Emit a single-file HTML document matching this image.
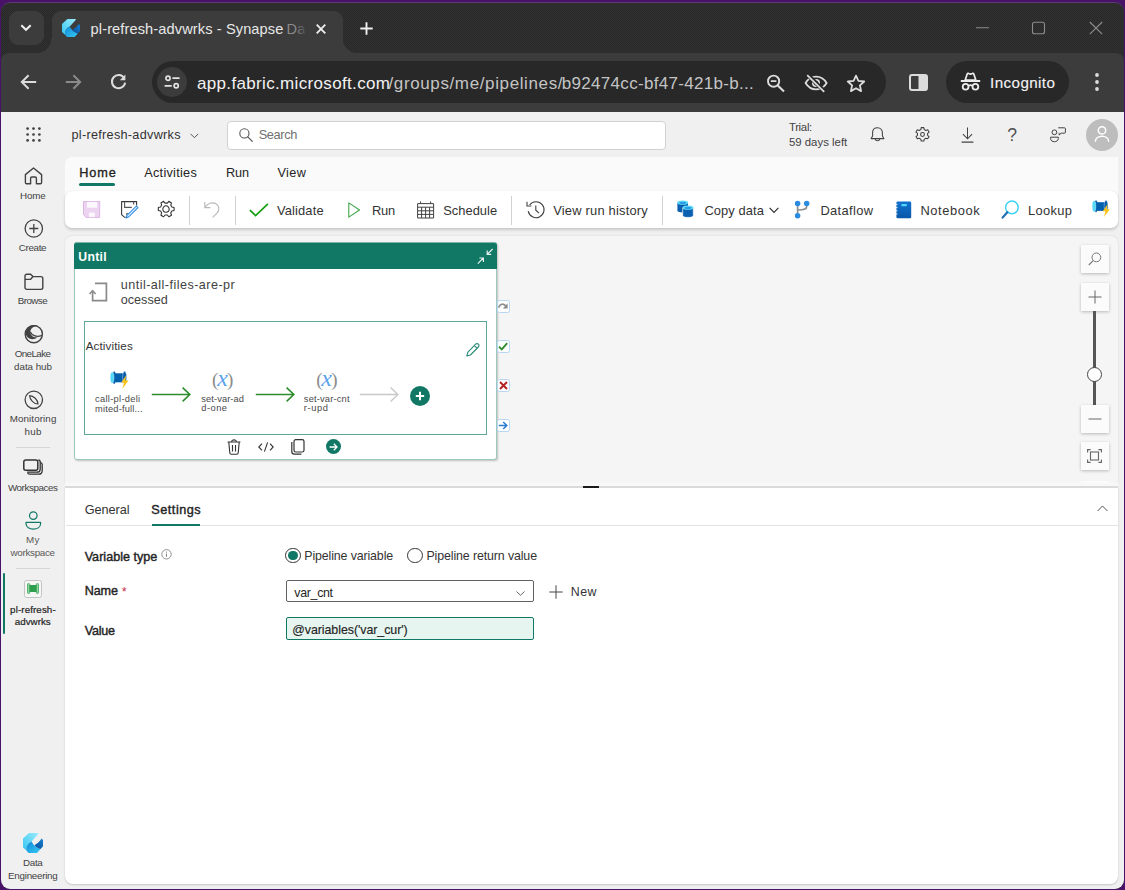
<!DOCTYPE html>
<html lang="en">
<head>
<meta charset="utf-8">
<title>pl-refresh-advwrks - Synapse Data Engineering</title>
<style>
*{box-sizing:border-box;margin:0;padding:0}
html,body{width:1125px;height:890px;overflow:hidden}
body{background:#471267;font-family:"Liberation Sans",sans-serif;position:relative;color:#242424}
.abs,.t{position:absolute}
.t{white-space:nowrap;line-height:1;transform-origin:0 0}
svg{position:absolute;overflow:visible}
#win{position:absolute;left:1px;top:2px;width:1123px;height:886.500px;border-radius:9px;background-color:#292929;background-image:conic-gradient(#313131 25%,transparent 0 50%,#313131 0 75%,transparent 0);background-size:2px 2px;overflow:hidden;border-top:1px solid #5e3b72}
/* everything inside #win uses page coords via offset wrapper */
#pg{position:absolute;left:-1px;top:-3px;width:1125px;height:890px}
#tab{left:51.500px;top:11px;width:291px;height:45px;background:#3c3c3c;border-radius:9px 9px 0 0}
#tbar{left:1px;top:53px;width:1123px;height:60px;background:#3c3c3c;border-radius:8px 8px 0 0}
#url{left:152px;top:61px;width:734px;height:42px;border-radius:21px;background:#282828}
#incog{left:946px;top:61px;width:123px;height:42px;border-radius:21px;background:#282828}
#page{left:1px;top:112px;width:1123px;height:778px;background:#f0f0f0}
#content{left:65px;top:157px;width:1053px;height:40px;background:#fafafa;border-radius:7px 0 0 0}
#ribbon{left:65px;top:191px;width:1053px;height:37px;background:#fff;border-radius:7px;box-shadow:0 2px 3px rgba(0,0,0,.16),0 0 1px rgba(0,0,0,.14)}
#canvas{left:65px;top:236px;width:1053px;height:247px;background:#f5f5f5;border-radius:7px 7px 0 0;box-shadow:0 0 2px rgba(0,0,0,.12)}
#bottom{left:65px;top:487px;width:1053px;height:397px;background:#fff;border-radius:0 0 8px 8px;box-shadow:0 1px 2px rgba(0,0,0,.18)}
.zb{left:1081px;width:28px;height:28px;background:#fbfbfb;box-shadow:0 1px 3px rgba(0,0,0,.25)}
.sep{position:absolute;width:1px;background:#d1d1d1}
</style>
</head>
<body>
<div id="win"><div id="pg">

<!-- ===== browser chrome ===== -->
<div class="abs" id="tab"></div>
<div class="abs" id="tbar"></div>
<div class="abs" style="left:36px;top:37.500px;width:15.500px;height:15.500px;background:radial-gradient(circle at 0 0,rgba(60,60,60,0) 15px,#3c3c3c 15.800px)"></div>
<div class="abs" style="left:342.500px;top:37.500px;width:15.500px;height:15.500px;background:radial-gradient(circle at 100% 0,rgba(60,60,60,0) 15px,#3c3c3c 15.800px)"></div>
<div class="abs" style="left:9px;top:11px;width:35px;height:34px;border-radius:9px;background:#3c3c3c"></div>
<div class="abs" id="url"></div>
<div class="abs" id="incog"></div>


<!-- tab search button chevron -->
<svg style="left:9.400px;top:11px" width="34" height="33" viewBox="0 0 34 33"><path d="M12.3 14.2 L17 18.8 L21.7 14.2" fill="none" stroke="#f0f0f0" stroke-width="2"/></svg>
<!-- favicon -->
<svg style="left:62px;top:19px" width="18" height="18" viewBox="0 0 20 20">
<linearGradient id="fa1" x1="0" y1="1" x2="1" y2="0"><stop offset="0" stop-color="#35c6f2"/><stop offset="1" stop-color="#9aebfc"/></linearGradient>
<linearGradient id="fa2" x1="0" y1="0" x2="1" y2="1"><stop offset="0" stop-color="#138ad8"/><stop offset="1" stop-color="#33c9f5"/></linearGradient>
<linearGradient id="fa3" x1="1" y1="0" x2="0" y2="1"><stop offset="0" stop-color="#1583d3"/><stop offset="1" stop-color="#084c9a"/></linearGradient>
<path d="M6 0 L15.2 0 L15.2 1 L8.6 8.4 C5 10 3.2 13 3.4 17.4 L0 14.4 L0 5.6 Z" fill="url(#fa1)"/>
<path d="M8.6 8.4 C5 10 3 13 3.4 17.4 L5.6 20 L14 20 L17.6 16 C14 15 10.5 12.5 8.6 8.4 Z" fill="url(#fa2)"/>
<path d="M18.5 5.6 L20 7 L20 13.2 L17.6 16 C15 15.3 13 14 11.5 12.2 C14.5 10.5 17 8.5 18.5 5.6 Z" fill="url(#fa3)"/>
</svg>
<span class="t" style="left:90.624px;top:22.44px;font-size:14.6px;letter-spacing:0.109px;color:#e8e8e8">pl-refresh-advwrks - Synapse</span>
<span class="t" style="left:286.624px;top:22.44px;font-size:14.6px;color:#8a8a8a">Da</span>
<div class="abs" style="left:296px;top:18px;width:14px;height:22px;background:linear-gradient(90deg,rgba(60,60,60,0),#3c3c3c 80%)"></div>
<svg style="left:316px;top:24px" width="10" height="10" viewBox="0 0 10 10"><path d="M0.7 0.7 L9.3 9.3 M9.3 0.7 L0.7 9.3" stroke="#f0f0f0" stroke-width="1.8" fill="none"/></svg>
<svg style="left:360px;top:22px" width="13" height="13" viewBox="0 0 13 13"><path d="M6.5 0.3 V12.7 M0.3 6.5 H12.7" stroke="#f0f0f0" stroke-width="1.9" fill="none"/></svg>
<!-- window controls -->
<svg style="left:975px;top:20px" width="130" height="16" viewBox="0 0 130 16">
<path d="M1 7.8 H14" stroke="#8d8d8d" stroke-width="1.1" fill="none"/>
<rect x="57.5" y="2.3" width="12" height="11.5" rx="2" fill="none" stroke="#8d8d8d" stroke-width="1.1"/>
<path d="M114.8 2 L127.2 14.2 M127.2 2 L114.8 14.2" stroke="#8d8d8d" stroke-width="1.1" fill="none"/>
</svg>
<!-- nav buttons -->
<svg style="left:20px;top:73px" width="110" height="18" viewBox="0 0 110 18">
<path d="M16.2 9 H2.5 M8.6 2.2 L1.8 9 L8.6 15.8" stroke="#dcdcdc" stroke-width="2" fill="none"/>
<path d="M45.8 9 H59.5 M53.4 2.2 L60.2 9 L53.4 15.8" stroke="#8a8a8a" stroke-width="2" fill="none"/>
<path d="M104.2 5.2 A6.6 6.6 0 1 0 105.1 9.6" stroke="#dcdcdc" stroke-width="2" fill="none"/>
<path d="M105.4 1.6 V7.2 H99.8 Z" fill="#dcdcdc"/>
</svg>
<!-- site info -->
<div class="abs" style="left:157px;top:67px;width:30px;height:30px;border-radius:15px;background:#3c3c3c"></div>
<svg style="left:164px;top:74px" width="16" height="16" viewBox="0 0 16 16">
<circle cx="4" cy="4.2" r="2.1" fill="none" stroke="#e3e3e3" stroke-width="1.7"/><path d="M8.4 4.2 H15.6" stroke="#e3e3e3" stroke-width="1.8"/>
<circle cx="12.2" cy="11.8" r="2.1" fill="none" stroke="#e3e3e3" stroke-width="1.7"/><path d="M0.6 11.8 H7.8" stroke="#e3e3e3" stroke-width="1.8"/>
</svg>
<span class="t" style="left:196.98px;top:75.21px;font-size:17px;letter-spacing:0.341px;color:#f2f2f2">app.fabric.microsoft.com</span>
<span class="t" style="left:388.48px;top:75.21px;font-size:17px;letter-spacing:0.622px;color:#c4c4c4">/groups/me/pipelines/</span>
<span class="t" style="left:561.78px;top:75.21px;font-size:17px;letter-spacing:0.309px;color:#c4c4c4">b92474cc-bf47-421b-b...</span>
<!-- zoom / eye / star -->
<svg style="left:766px;top:73px" width="102" height="20" viewBox="0 0 102 20">
<circle cx="7.6" cy="8.2" r="5.6" fill="none" stroke="#dcdcdc" stroke-width="1.9"/><path d="M11.8 12.4 L18 18.6" stroke="#dcdcdc" stroke-width="2.1"/><path d="M4.8 8.2 H10.4" stroke="#dcdcdc" stroke-width="1.7"/>
<path d="M39.6 10 C43 4.2 47 3.6 50 3.6 C54 3.6 58 5.6 60.6 10 C58 14.6 54 16.4 50 16.4 C47 16.4 43 15.6 39.6 10 Z" fill="none" stroke="#dcdcdc" stroke-width="1.8"/>
<circle cx="50" cy="10" r="3.2" fill="none" stroke="#dcdcdc" stroke-width="1.7"/><path d="M41.6 1.8 L58.6 18.4" stroke="#282828" stroke-width="4.2"/><path d="M41.2 2.2 L58.2 18.8" stroke="#dcdcdc" stroke-width="1.8"/>
<path d="M90 2.6 L92.4 7.9 L98.2 8.5 L93.9 12.4 L95.1 18.1 L90 15.2 L84.9 18.1 L86.1 12.4 L81.8 8.5 L87.6 7.9 Z" fill="none" stroke="#dcdcdc" stroke-width="1.8" stroke-linejoin="round"/>
</svg>
<!-- side panel -->
<svg style="left:909px;top:74px" width="19" height="17" viewBox="0 0 19 17"><rect x="1" y="1" width="17" height="15" rx="2" fill="none" stroke="#dcdcdc" stroke-width="2"/><rect x="9.5" y="1" width="8.5" height="15" fill="#dcdcdc"/></svg>
<!-- incognito -->
<svg style="left:960px;top:72px" width="21" height="20" viewBox="0 0 21 20">
<path d="M5.2 8 L7.2 2 C7.5 1.3 8.2 1.1 8.8 1.4 L10.5 2.2 L12.2 1.4 C12.8 1.1 13.5 1.3 13.8 2 L15.8 8 Z" fill="none" stroke="#ececec" stroke-width="1.7" stroke-linejoin="round"/>
<path d="M0.8 9 H20.2" stroke="#ececec" stroke-width="1.9"/>
<circle cx="5.6" cy="14.8" r="2.9" fill="none" stroke="#ececec" stroke-width="1.8"/><circle cx="15.4" cy="14.8" r="2.9" fill="none" stroke="#ececec" stroke-width="1.8"/><path d="M8.4 14 C9.6 13 11.4 13 12.6 14" fill="none" stroke="#ececec" stroke-width="1.6"/>
</svg>
<span class="t" style="left:990.088px;top:75.13px;font-size:15.2px;letter-spacing:0.398px;color:#f2f2f2;font-weight:normal;-webkit-text-stroke:0.15px #f2f2f2">Incognito</span>
<svg style="left:1094px;top:72px" width="6" height="20" viewBox="0 0 6 20"><circle cx="3" cy="3" r="1.9" fill="#dcdcdc"/><circle cx="3" cy="10" r="1.9" fill="#dcdcdc"/><circle cx="3" cy="17" r="1.9" fill="#dcdcdc"/></svg>

<!-- ===== page ===== -->
<div class="abs" id="page"></div>

<!-- ===== app header ===== -->
<svg style="left:26px;top:127px" width="15" height="15" viewBox="0 0 15 15" fill="#424242">
<circle cx="1.6" cy="1.6" r="1.350"/><circle cx="7.5" cy="1.6" r="1.350"/><circle cx="13.4" cy="1.6" r="1.350"/>
<circle cx="1.6" cy="7.5" r="1.350"/><circle cx="7.5" cy="7.5" r="1.350"/><circle cx="13.4" cy="7.5" r="1.350"/>
<circle cx="1.6" cy="13.4" r="1.350"/><circle cx="7.5" cy="13.4" r="1.350"/><circle cx="13.4" cy="13.4" r="1.350"/></svg>
<span class="t" style="left:71.538px;top:129.45px;font-size:12.7px;letter-spacing:0.275px;color:#333">pl-refresh-advwrks</span>
<svg style="left:190px;top:133px" width="9" height="6" viewBox="0 0 9 6"><path d="M0.6 0.9 L4.4 4.7 L8.2 0.9" fill="none" stroke="#555" stroke-width="1"/></svg>
<div class="abs" style="left:227px;top:120.5px;width:439px;height:29px;background:#fff;border:1px solid #d1d1d1;border-radius:4px"></div>
<svg style="left:238.5px;top:128px" width="14" height="14" viewBox="0 0 14 14"><circle cx="5.4" cy="5.4" r="4.6" fill="none" stroke="#555" stroke-width="1.1"/><path d="M8.8 8.8 L13.3 13.3" stroke="#555" stroke-width="1.2" stroke-linecap="round"/></svg>
<span class="t" style="left:258.632px;top:128.96px;font-size:12.8px;letter-spacing:-0.362px;color:#707070">Search</span>
<span class="t" style="left:788.916px;top:122.05px;font-size:11.4px;letter-spacing:-0.305px;color:#424242">Trial:</span>
<span class="t" style="left:788.916px;top:137.15px;font-size:11.4px;letter-spacing:0.009px;color:#424242">59 days left</span>
<!-- bell -->
<svg style="left:870px;top:126.5px" width="15" height="16" viewBox="0 0 15 16"><path d="M7.5 0.8 C4.4 0.8 2.6 3 2.6 5.8 V9 L1.1 11.6 H13.9 L12.4 9 V5.8 C12.4 3 10.6 0.8 7.5 0.8 Z" fill="none" stroke="#424242" stroke-width="1.05" stroke-linejoin="round"/><path d="M5.3 12 C5.6 14.4 9.4 14.4 9.7 12" fill="none" stroke="#424242" stroke-width="1.05"/></svg>
<!-- gear -->
<svg style="left:914px;top:125.800px" width="17" height="17" viewBox="0 0 24 24"><path d="M12 9.300a2.700 2.700 0 1 0 0 5.400a2.700 2.700 0 1 0 0-5.400z M10.200 2.300l-.6 2.700-2.300 1.300-2.600-.9-1.900 3.200 2.100 1.800v2.700l-2.100 1.800 1.900 3.200 2.600-.9 2.300 1.300.6 2.700h3.700l.6-2.700 2.300-1.300 2.600.9 1.900-3.200-2.100-1.800v-2.700l2.100-1.800-1.900-3.200-2.600.9-2.300-1.300-.6-2.700z" fill="none" stroke="#424242" stroke-width="1.5" stroke-linejoin="round"/></svg>
<!-- download -->
<svg style="left:961px;top:127px" width="13" height="16" viewBox="0 0 13 16"><path d="M6.500 0.500 V11.600 M1.900 7.200 L6.500 11.800 L11.100 7.200 M0.600 15.100 H12.400" fill="none" stroke="#424242" stroke-width="1.05"/></svg>
<span class="t" style="left:1007.14px;top:127.20px;font-size:17.6px;color:#505050">?</span>
<!-- feedback -->
<svg style="left:1050px;top:126.5px" width="16" height="16" viewBox="0 0 16 16"><circle cx="4.4" cy="5.300" r="2.400" fill="none" stroke="#424242" stroke-width="1"/><path d="M0.600 10.200 H8.300 V11.500 C8.300 15.800 0.600 15.800 0.600 11.500 Z" fill="none" stroke="#424242" stroke-width="1" stroke-linejoin="round"/><path d="M8.200 0.800 H14.600 C15.100 0.800 15.400 1.100 15.400 1.600 V5.400 C15.400 5.900 15.100 6.200 14.600 6.200 H11.200 L9.200 8 V6.200 H8.800" fill="none" stroke="#424242" stroke-width="1" stroke-linejoin="round"/></svg>
<!-- avatar -->
<div class="abs" style="left:1086px;top:118.500px;width:32px;height:32px;border-radius:16px;background:#bdbdbd"></div>
<svg style="left:1093px;top:125px" width="18" height="18" viewBox="0 0 18 18"><circle cx="9" cy="5.400" r="3.700" fill="none" stroke="#fff" stroke-width="1.500"/><path d="M2.300 16.800 C2.300 9.400 15.700 9.400 15.700 16.800" fill="none" stroke="#fff" stroke-width="1.500"/></svg>

<!-- ===== left nav ===== -->
<svg style="left:24px;top:167px" width="19" height="18" viewBox="0 0 19 18"><path d="M9.500 1 L1.400 7.600 V15.600 C1.400 16.300 1.900 16.800 2.600 16.800 H6.600 V11.200 C6.600 10.500 7.100 10 7.800 10 H11.200 C11.900 10 12.400 10.500 12.400 11.200 V16.800 H16.400 C17.100 16.800 17.600 16.300 17.600 15.600 V7.600 Z" fill="none" stroke="#424242" stroke-width="1.400" stroke-linejoin="round"/></svg>
<span class="t" style="left:20.112px;top:191.20px;font-size:9.8px;letter-spacing:-0.222px;color:#424242">Home</span>
<svg style="left:23.500px;top:219px" width="20" height="20" viewBox="0 0 20 20"><circle cx="9.800" cy="9.500" r="8.700" fill="none" stroke="#424242" stroke-width="1.300"/><path d="M9.800 5 V14 M5.300 9.500 H14.300" stroke="#424242" stroke-width="1.300"/></svg>
<span class="t" style="left:18.812px;top:243.20px;font-size:9.8px;letter-spacing:-0.346px;color:#424242">Create</span>
<svg style="left:23.500px;top:272.500px" width="20" height="18" viewBox="0 0 20 18"><path d="M1 3 C1 2 1.800 1.200 2.800 1.200 H6.600 L9 3.600 H17 C18 3.600 18.800 4.400 18.800 5.400 V14.600 C18.800 15.600 18 16.400 17 16.400 H2.800 C1.800 16.400 1 15.600 1 14.600 Z" fill="none" stroke="#424242" stroke-width="1.400" stroke-linejoin="round"/><path d="M1 6.400 H6.400 L9 3.600" fill="none" stroke="#424242" stroke-width="1.400" stroke-linejoin="round"/></svg>
<span class="t" style="left:17.712px;top:296.40px;font-size:9.8px;letter-spacing:-0.539px;color:#424242">Browse</span>
<!-- onelake -->
<svg style="left:23.500px;top:323.500px" width="20" height="20" viewBox="0 0 20 20"><circle cx="9.800" cy="10.200" r="8.600" fill="none" stroke="#424242" stroke-width="1.400"/><path d="M2.200 6 C4 1.400 10 -0.500 14.800 2.400 C10 2 6.400 4 6.400 8 C6.400 11.500 9.500 14 13.400 13.200 C10.500 16.200 5 15.500 2.800 12.500 C1.500 10.500 1.400 8 2.200 6 Z" fill="#424242"/><path d="M6.400 8 C8 12 13 13.500 18 11.400" fill="none" stroke="#424242" stroke-width="1.300"/></svg>
<span class="t" style="left:14.712px;top:348.70px;font-size:9.8px;letter-spacing:-0.582px;color:#424242">OneLake</span>
<span class="t" style="left:14.112px;top:362.20px;font-size:9.8px;letter-spacing:-0.052px;color:#424242">data hub</span>
<!-- monitoring -->
<svg style="left:23.500px;top:389.500px" width="20" height="20" viewBox="0 0 20 20"><circle cx="9.800" cy="9.800" r="8.700" fill="none" stroke="#424242" stroke-width="1.300"/><path d="M5.600 5.600 C9.500 5.600 14 10 14 14 C10 14 5.600 9.600 5.600 5.600 Z" fill="none" stroke="#424242" stroke-width="1.200" stroke-linejoin="round"/></svg>
<span class="t" style="left:9.712px;top:414.40px;font-size:9.8px;letter-spacing:0.103px;color:#424242">Monitoring</span>
<span class="t" style="left:24.612px;top:427.00px;font-size:9.8px;letter-spacing:0.308px;color:#424242">hub</span>
<div class="abs" style="left:16px;top:447px;width:34px;height:1px;background:#d6d6d6"></div>
<!-- workspaces -->
<svg style="left:23px;top:459px" width="21" height="17" viewBox="0 0 21 17"><path d="M17.200 3.400 C18.600 3.600 19.200 4.400 19.200 5.600 V11.600 C19.200 13.800 18 15.200 15.800 15.200 H6.800 C5.600 15.200 4.800 14.600 4.600 13.600" fill="none" stroke="#333" stroke-width="1.300"/><path d="M15.400 1 C16.600 1 17.200 1.800 17.200 3 V10.200 C17.200 12.200 16.200 13.200 14.200 13.200 H4.200" fill="none" stroke="#333" stroke-width="1.300"/><rect x="0.800" y="0.900" width="14" height="10.400" rx="2" fill="#f0f0f0" stroke="#333" stroke-width="1.500"/></svg>
<span class="t" style="left:7.912px;top:483.10px;font-size:9.8px;letter-spacing:-0.418px;color:#424242">Workspaces</span>
<!-- my workspace -->
<svg style="left:25px;top:510.500px" width="17" height="19" viewBox="0 0 17 19"><circle cx="8.300" cy="4.600" r="3.800" fill="none" stroke="#117865" stroke-width="1.200"/><path d="M1 11.400 H15.600 V12.600 C15.600 20 1 20 1 12.600 Z" fill="none" stroke="#117865" stroke-width="1.200" stroke-linejoin="round"/></svg>
<span class="t" style="left:26.112px;top:534.80px;font-size:9.8px;letter-spacing:0.313px;color:#5a5a5a">My</span>
<span class="t" style="left:10.512px;top:547.80px;font-size:9.8px;letter-spacing:-0.282px;color:#5a5a5a">workspace</span>
<div class="abs" style="left:16px;top:568px;width:34px;height:1px;background:#d6d6d6"></div>
<div class="abs" style="left:3px;top:573px;width:2px;height:61px;background:#117865;border-radius:1px"></div>
<!-- pipeline tile -->
<div class="abs" style="left:24px;top:579.500px;width:18px;height:18px;border:1px solid #c4c4c4;border-radius:2.500px;background:#f6f6f6"></div>
<svg style="left:27px;top:583px" width="12" height="11" viewBox="0 0 12 11"><rect x="2" y="2" width="8" height="7" fill="#2e9e4f"/><rect x="0.500" y="0.500" width="2.200" height="10" rx="1" fill="#8fd39f" stroke="#2e9e4f" stroke-width="0.700"/><rect x="9.300" y="0.500" width="2.200" height="10" rx="1" fill="#8fd39f" stroke="#2e9e4f" stroke-width="0.700"/></svg>
<span class="t" style="left:10.112px;top:604.90px;font-size:9.8px;letter-spacing:0.092px;color:#242424;-webkit-text-stroke:0.200px #242424">pl-refresh-</span>
<span class="t" style="left:14.812px;top:617.30px;font-size:9.8px;letter-spacing:0.006px;color:#242424;-webkit-text-stroke:0.200px #242424">advwrks</span>
<!-- data engineering -->
<svg style="left:23px;top:833px" width="20" height="20" viewBox="0 0 20 20">
<path d="M6 0 L15.200 0 L15.200 1 L8.600 8.400 C5 10 3.200 13 3.400 17.400 L0 14.400 L0 5.600 Z" fill="url(#fa1)"/>
<path d="M8.600 8.400 C5 10 3 13 3.400 17.400 L5.600 20 L14 20 L17.600 16 C14 15 10.500 12.500 8.600 8.400 Z" fill="url(#fa2)"/>
<path d="M18.500 5.600 L20 7 L20 13.200 L17.600 16 C15 15.300 13 14 11.500 12.200 C14.500 10.500 17 8.500 18.500 5.600 Z" fill="url(#fa3)"/></svg>
<span class="t" style="left:23.112px;top:858.20px;font-size:9.8px;letter-spacing:-0.376px;color:#424242">Data</span>
<span class="t" style="left:8.112px;top:871.00px;font-size:9.8px;letter-spacing:-0.272px;color:#424242">Engineering</span>
<div class="abs" id="content"></div>

<!-- ===== ribbon tabs ===== -->
<span class="t" style="left:79.238px;top:166.65px;font-size:12.7px;letter-spacing:0.893px;color:#242424;-webkit-text-stroke:0.350px #242424">Home</span>
<div class="abs" style="left:79px;top:183px;width:36px;height:3px;border-radius:1.5px;background:#117865"></div>
<span class="t" style="left:144.238px;top:166.65px;font-size:12.7px;letter-spacing:0.274px;color:#242424">Activities</span>
<span class="t" style="left:226.038px;top:166.65px;font-size:12.7px;letter-spacing:-0.079px;color:#242424">Run</span>
<span class="t" style="left:277.438px;top:166.65px;font-size:12.7px;letter-spacing:0.414px;color:#242424">View</span>
<div class="abs" id="ribbon"></div>

<!-- ===== ribbon buttons ===== -->
<!-- save (disabled, pink) -->
<svg style="left:82.800px;top:201px" width="17.200" height="17" viewBox="0 0 17.200 17"><path d="M0.500 0.500 H16.700 V16.400 H3.200 L0.500 13.800 Z" fill="#ecd3f0" stroke="#dcaee4" stroke-width="0.900" stroke-linejoin="round"/><rect x="4" y="0.900" width="10.200" height="5.800" fill="#fbf7fc"/><rect x="5.900" y="11.600" width="5.900" height="4.500" fill="#fbf7fc"/></svg>
<!-- save as -->
<svg style="left:121px;top:201px" width="17.500" height="17.500" viewBox="0 0 17.500 17.500"><path d="M15.600 4.600 V0.600 H0.600 V13.600 L3.400 16.200 H4.600" fill="none" stroke="#3a3a3a" stroke-width="1.100" stroke-linejoin="round"/><path d="M3.600 0.800 V6.400 H10.800" fill="none" stroke="#555" stroke-width="1.100"/><path d="M12.600 0.800 V3.600" fill="none" stroke="#555" stroke-width="1.100"/><path d="M5.600 12.400 H7.800 M5.600 12.400 V14.200" fill="none" stroke="#666" stroke-width="1"/><path d="M15.400 5 L17 6.600 L7.600 16 L5 17 L5.900 14.500 Z" fill="#d6ebfc" stroke="#2886de" stroke-width="1.050" stroke-linejoin="round"/></svg>
<!-- gear -->
<svg style="left:156.400px;top:199.200px" width="20" height="20" viewBox="0 0 24 24"><path transform="rotate(90 12 12)" d="M12 8.200a3.800 3.800 0 1 0 0 7.600a3.800 3.800 0 1 0 0-7.600z M10.200 2.300l-.6 2.700-2.300 1.300-2.600-.9-1.900 3.200 2.100 1.800v2.700l-2.100 1.800 1.900 3.200 2.600-.9 2.300 1.300.6 2.700h3.700l.6-2.700 2.300-1.300 2.600.9 1.900-3.200-2.100-1.800v-2.700l2.100-1.800-1.900-3.200-2.600.9-2.300-1.300-.6-2.700z" fill="none" stroke="#333" stroke-width="1.300" stroke-linejoin="round"/></svg>
<div class="sep" style="left:189px;top:196px;height:29px"></div>
<!-- undo -->
<svg style="left:204px;top:201px" width="17" height="17" viewBox="0 0 17 17"><path d="M0.800 1 V6.600 H6.400 M1 6.400 C3.500 2.400 8 0.800 11.500 2.600 C15.400 4.600 16 9 13 12.200 L8.600 16.400" fill="none" stroke="#b8b8b8" stroke-width="1.100"/></svg>
<div class="sep" style="left:235px;top:196px;height:29px"></div>
<!-- check -->
<svg style="left:249px;top:203px" width="20" height="14" viewBox="0 0 20 14"><path d="M0.900 7.200 L6.600 12.600 L18.900 0.800" fill="none" stroke="#13a10e" stroke-width="1.700"/></svg>
<span class="t" style="left:277.026px;top:204.78px;font-size:12.9px;letter-spacing:0.130px;color:#333">Validate</span>
<!-- play -->
<svg style="left:347.500px;top:202px" width="13" height="16" viewBox="0 0 13 16"><path d="M0.800 0.900 L11.500 8 L0.800 15.100 Z" fill="none" stroke="#3fa648" stroke-width="1.100" stroke-linejoin="round"/></svg>
<span class="t" style="left:372.026px;top:204.78px;font-size:12.9px;letter-spacing:-0.304px;color:#333">Run</span>
<!-- calendar -->
<svg style="left:417px;top:200.500px" width="18" height="18" viewBox="0 0 18 18"><path d="M0.600 2.600 H16.600 V17 H0.600 Z M0.600 6.200 H16.600 M0.600 9.800 H16.600 M0.600 13.400 H16.600 M4.600 6.200 V17 M8.600 6.200 V17 M12.600 6.200 V17 M3.600 0.400 V2.600 M13.600 0.400 V2.600" fill="none" stroke="#424242" stroke-width="1"/></svg>
<span class="t" style="left:443.226px;top:204.78px;font-size:12.9px;letter-spacing:0.012px;color:#333">Schedule</span>
<div class="sep" style="left:511px;top:196px;height:29px"></div>
<!-- history -->
<svg style="left:526px;top:201px" width="19" height="18" viewBox="0 0 19 18"><path d="M3.600 4 A8 8 0 1 1 2.200 10.200" fill="none" stroke="#424242" stroke-width="1.100"/><path d="M1 0.800 V5 H5.400" fill="none" stroke="#424242" stroke-width="1.100"/><path d="M9.800 4.600 V9.200 L13 12.200" fill="none" stroke="#424242" stroke-width="1.100"/></svg>
<span class="t" style="left:553.226px;top:204.78px;font-size:12.9px;letter-spacing:0.205px;color:#333">View run history</span>
<div class="sep" style="left:662px;top:196px;height:29px"></div>
<!-- copy data -->
<svg style="left:677px;top:200px" width="17" height="18.500" viewBox="0 0 17 18.500">
<path d="M0.400 2.600 V10.800 C0.400 13 11 13 11 10.800 V2.600 Z" fill="#0a5fb0"/><ellipse cx="5.700" cy="2.700" rx="5.300" ry="2.100" fill="#5fdcf7"/><ellipse cx="5.700" cy="2.900" rx="3.400" ry="1.100" fill="#2a9be6"/>
<path d="M5.700 7.600 V15.800 C5.700 18 16.300 18 16.300 15.800 V7.600 Z" fill="#0a5fb0" stroke="#fff" stroke-width="0.700"/><ellipse cx="11" cy="7.700" rx="5.300" ry="2.100" fill="#5fdcf7"/><ellipse cx="11" cy="7.900" rx="3.400" ry="1.100" fill="#2a9be6"/></svg>
<span class="t" style="left:704.426px;top:204.78px;font-size:12.9px;letter-spacing:0.098px;color:#333">Copy data</span>
<svg style="left:769.300px;top:207.300px" width="10" height="7" viewBox="0 0 10 7"><path d="M0.600 0.900 L5 5.500 L9.400 0.900" fill="none" stroke="#333" stroke-width="1.200"/></svg>
<!-- dataflow -->
<svg style="left:794px;top:199.500px" width="17" height="20" viewBox="0 0 17 20"><path d="M3.600 3.500 V15.800 M12.700 3.500 V6.400 C12.700 9.400 9.600 9.800 3.800 10" fill="none" stroke="#8f8f8f" stroke-width="1.700"/><circle cx="3.600" cy="3.500" r="2.750" fill="#2b8be0"/><circle cx="12.700" cy="3.500" r="2.750" fill="#2b8be0"/><circle cx="3.600" cy="15.800" r="2.750" fill="#2b8be0"/></svg>
<span class="t" style="left:820.426px;top:204.78px;font-size:12.9px;letter-spacing:0.342px;color:#333">Dataflow</span>
<!-- notebook -->
<svg style="left:894.500px;top:200.500px" width="17" height="18" viewBox="0 0 17 18"><linearGradient id="nb1" x1="0" y1="0" x2="0" y2="1"><stop offset="0" stop-color="#1172cf"/><stop offset="1" stop-color="#0a58a8"/></linearGradient><rect x="1.400" y="0.400" width="14.800" height="16.900" rx="1.300" fill="url(#nb1)"/><rect x="6.400" y="3.100" width="5.400" height="2.100" rx="0.400" fill="#4fd8f8"/><path d="M0.300 3.400 H2.600 M0.300 6.600 H2.600 M0.300 9.800 H2.600 M0.300 13 H2.600" stroke="#e9f2fb" stroke-width="0.900"/></svg>
<span class="t" style="left:920.426px;top:204.78px;font-size:12.9px;letter-spacing:0.594px;color:#333">Notebook</span>
<!-- lookup -->
<svg style="left:1001px;top:199.500px" width="19" height="19" viewBox="0 0 19 19"><circle cx="10.900" cy="7.400" r="6.300" fill="#fff" stroke="#3fd3f5" stroke-width="1.500"/><path d="M6.300 12.200 L1.600 17.600" stroke="#1f6fb5" stroke-width="2.200" stroke-linecap="round"/></svg>
<span class="t" style="left:1028.03px;top:204.78px;font-size:12.9px;letter-spacing:0.330px;color:#333">Lookup</span>
<!-- invoke pipeline -->
<svg style="left:1092.300px;top:200px" width="18.300" height="17.300" viewBox="0 0 19 18"><ellipse cx="4.2" cy="6.600" rx="1.800" ry="6.300" fill="#0b5cad"/><rect x="4.200" y="2.300" width="10" height="9" fill="#0060ad"/><ellipse cx="2.100" cy="6.600" rx="1.900" ry="5.700" fill="#4fd8f8" stroke="#e8f8fe" stroke-width="0.400"/><ellipse cx="14.600" cy="6.200" rx="2" ry="6" fill="#0b5cad" stroke="#e8f8fe" stroke-width="0.400"/><path d="M16.200 4.200 L11.200 11.600 H14 L12.400 17.800 L18.600 9.600 H15.400 Z" fill="#fcc419"/></svg>
<div class="abs" id="canvas"></div>

<!-- ===== canvas content ===== -->
<div class="abs" style="left:74px;top:242px;width:422.600px;height:218px;background:#fff;border:1px solid #9cc8be;border-radius:3px;box-shadow:1px 1px 2px rgba(0,0,0,.22)"></div>
<div class="abs" style="left:74px;top:242px;width:422.600px;height:27px;background:#117865;border-radius:3px 3px 0 0;border-top:1px solid #7db7ab"></div>
<span class="t" style="left:78.268px;top:251.07px;font-size:12.2px;letter-spacing:0.346px;color:#fff;font-weight:bold">Until</span>
<svg style="left:477px;top:247.500px" width="17" height="17" viewBox="0 0 17 17"><path d="M15.600 1 L10.400 6.200 M10.200 2.400 V6.400 H14.200 M0.800 15.600 L6.200 10.200 M2.400 10 H6.400 V14" fill="none" stroke="#e6f2ef" stroke-width="1.200"/></svg>
<!-- until icon -->
<svg style="left:88.600px;top:282.400px" width="19" height="20" viewBox="0 0 19 20"><path d="M6 1.400 H17.400 V18.600 H3.600 V9" fill="none" stroke="#8a8a8a" stroke-width="1.700"/><path d="M0.600 12 L3.600 8.600 L6.600 12" fill="none" stroke="#8a8a8a" stroke-width="1.500"/></svg>
<span class="t" style="left:120.744px;top:279.33px;font-size:12.6px;letter-spacing:0.463px;color:#424242">until-all-files-are-pr</span>
<span class="t" style="left:120.744px;top:294.33px;font-size:12.6px;letter-spacing:0.015px;color:#424242">ocessed</span>
<div class="abs" style="left:83.500px;top:320.500px;width:403.500px;height:114px;background:#fff;border:1.300px solid #5fa799"></div>
<span class="t" style="left:85.704px;top:340.28px;font-size:11.6px;letter-spacing:0.138px;color:#333">Activities</span>
<!-- pencil -->
<svg style="left:466px;top:343px" width="14" height="14" viewBox="0 0 14 14"><path d="M9.600 1.200 C10.400 0.400 11.600 0.400 12.400 1.200 C13.200 2 13.200 3.200 12.400 4 L4.400 12 L0.800 13 L1.800 9.400 Z M8.400 2.600 L11.200 5.400" fill="none" stroke="#2a8a78" stroke-width="1.100" stroke-linejoin="round"/></svg>
<!-- invoke pipeline icon -->
<svg style="left:109.600px;top:371.200px" width="19" height="18" viewBox="0 0 19 18"><ellipse cx="4.2" cy="6.600" rx="1.800" ry="6.300" fill="#0b5cad"/><rect x="4.200" y="2.300" width="10" height="9" fill="#0060ad"/><ellipse cx="2.100" cy="6.600" rx="1.900" ry="5.700" fill="#4fd8f8" stroke="#e8f8fe" stroke-width="0.400"/><ellipse cx="14.600" cy="6.200" rx="2" ry="6" fill="#0b5cad" stroke="#e8f8fe" stroke-width="0.400"/><path d="M16.200 4.200 L11.200 11.600 H14 L12.400 17.800 L18.600 9.600 H15.400 Z" fill="#fcc419"/></svg>
<span class="t" style="left:95.042px;top:394.53px;font-size:9.3px;letter-spacing:0.296px;color:#4a4a4a">call-pl-deli</span>
<span class="t" style="left:95.042px;top:405.03px;font-size:9.3px;letter-spacing:0.179px;color:#4a4a4a">mited-full...</span>
<svg style="left:151px;top:386px" width="41" height="17" viewBox="0 0 41 17"><path d="M0.800 8.500 H38.600 M31.600 1.600 L38.800 8.500 L31.600 15.400" fill="none" stroke="#2e8b2e" stroke-width="1.600"/></svg>
<!-- (x) 1 -->
<span class="t" style="left:212.06px;top:369.92px;font-size:19px;color:#8c8c8c;font-family:'Liberation Serif',serif">(</span>
<span class="t" style="left:217.16px;top:366.08px;font-size:24px;color:#5ba3ec;font-family:'Liberation Serif',serif;font-style:italic">x</span>
<span class="t" style="left:227.06px;top:369.92px;font-size:19px;color:#8c8c8c;font-family:'Liberation Serif',serif">)</span>
<span class="t" style="left:201.342px;top:394.53px;font-size:9.3px;letter-spacing:0.084px;color:#4a4a4a">set-var-ad</span>
<span class="t" style="left:201.342px;top:404.43px;font-size:9.3px;letter-spacing:0.459px;color:#4a4a4a">d-one</span>
<svg style="left:255px;top:386px" width="41" height="17" viewBox="0 0 41 17"><path d="M0.800 8.500 H38.600 M31.600 1.600 L38.800 8.500 L31.600 15.400" fill="none" stroke="#2e8b2e" stroke-width="1.600"/></svg>
<!-- (x) 2 -->
<span class="t" style="left:316.26px;top:369.92px;font-size:19px;color:#8c8c8c;font-family:'Liberation Serif',serif">(</span>
<span class="t" style="left:321.36px;top:366.08px;font-size:24px;color:#5ba3ec;font-family:'Liberation Serif',serif;font-style:italic">x</span>
<span class="t" style="left:331.26px;top:369.92px;font-size:19px;color:#8c8c8c;font-family:'Liberation Serif',serif">)</span>
<span class="t" style="left:303.842px;top:394.53px;font-size:9.3px;letter-spacing:0.179px;color:#4a4a4a">set-var-cnt</span>
<span class="t" style="left:303.842px;top:404.43px;font-size:9.3px;letter-spacing:0.574px;color:#4a4a4a">r-upd</span>
<svg style="left:359px;top:386px" width="41" height="17" viewBox="0 0 41 17"><path d="M0.800 8.500 H38.600 M31.600 1.600 L38.800 8.500 L31.600 15.400" fill="none" stroke="#c8c8c8" stroke-width="1.400"/></svg>
<div class="abs" style="left:410px;top:385.500px;width:20px;height:20px;border-radius:10px;background:#117865"></div>
<svg style="left:415px;top:390.500px" width="10" height="10" viewBox="0 0 10 10"><path d="M5 0.800 V9.200 M0.800 5 H9.200" stroke="#fff" stroke-width="2"/></svg>
<!-- bottom icons -->
<svg style="left:227px;top:438.600px" width="14" height="16" viewBox="0 0 14 16"><path d="M0.600 3 H13.400 M4.600 2.800 C4.600 0.200 9.400 0.200 9.400 2.800 M1.800 3.200 L2.800 14 C2.900 14.800 3.400 15.300 4.200 15.300 H9.800 C10.600 15.300 11.100 14.800 11.200 14 L12.200 3.200 M5.500 6 V12.400 M8.500 6 V12.400" fill="none" stroke="#333" stroke-width="1.100"/></svg>
<svg style="left:258px;top:441.700px" width="16" height="10" viewBox="0 0 16 10"><path d="M4 1.600 L0.800 5 L4 8.400 M12 1.600 L15.200 5 L12 8.400 M9.600 0.400 L6.400 9.600" fill="none" stroke="#333" stroke-width="1.100"/></svg>
<svg style="left:291px;top:438.600px" width="14" height="16" viewBox="0 0 14 16"><rect x="3" y="0.600" width="10" height="12.400" rx="1.800" fill="none" stroke="#333" stroke-width="1.200"/><path d="M0.800 3 V12.600 C0.800 14.200 1.800 15.200 3.400 15.200 H10.400" fill="none" stroke="#333" stroke-width="1.200"/></svg>
<div class="abs" style="left:325.800px;top:439.300px;width:15px;height:15px;border-radius:7.500px;background:#117865"></div>
<svg style="left:328.800px;top:442.800px" width="9" height="8" viewBox="0 0 9 8"><path d="M0.600 4 H8 M4.800 0.800 L8 4 L4.800 7.200" fill="none" stroke="#fff" stroke-width="1.300"/></svg>
<!-- connectors -->
<div class="abs" style="left:496.500px;top:299.500px;width:13px;height:13px;border:1.200px solid #b7d6f3;border-radius:2.500px;background:#fff"></div>
<svg style="left:498px;top:302px" width="10" height="8" viewBox="0 0 10 8"><path d="M0.800 5.600 C1.600 1.400 6 1.200 8 4.400" fill="none" stroke="#8a8a8a" stroke-width="1.700"/><path d="M9.600 1.200 V6.400 H4.800 Z" fill="#8a8a8a"/></svg>
<div class="abs" style="left:496.500px;top:339.500px;width:13px;height:13px;border:1.200px solid #b7d6f3;border-radius:2.500px;background:#fff"></div>
<svg style="left:498px;top:341.500px" width="10" height="9" viewBox="0 0 10 9"><path d="M1 4.600 L3.800 7.400 L9.200 1.200" fill="none" stroke="#2e8b2e" stroke-width="1.900"/></svg>
<div class="abs" style="left:496.500px;top:379px;width:13px;height:13px;border:1.200px solid #b7d6f3;border-radius:2.500px;background:#fff"></div>
<svg style="left:498.500px;top:381px" width="9" height="9" viewBox="0 0 9 9"><path d="M1 1 L8 8 M8 1 L1 8" fill="none" stroke="#b22222" stroke-width="1.900"/></svg>
<div class="abs" style="left:496.500px;top:418.500px;width:13px;height:13px;border:1.200px solid #b7d6f3;border-radius:2.500px;background:#fff"></div>
<svg style="left:498px;top:420.500px" width="10" height="9" viewBox="0 0 10 9"><path d="M0.800 4.500 H8.400 M5.200 1 L8.800 4.500 L5.200 8" fill="none" stroke="#2b7cd3" stroke-width="1.500"/></svg>
<!-- zoom controls -->
<div class="abs zb" style="top:245px"></div>
<svg style="left:1088px;top:252px" width="14" height="14" viewBox="0 0 14 14"><circle cx="8.400" cy="5.400" r="4.400" fill="none" stroke="#777" stroke-width="1"/><path d="M5.200 8.600 L0.800 13" stroke="#777" stroke-width="1.100"/></svg>
<div class="abs zb" style="top:283px"></div>
<svg style="left:1088px;top:290px" width="14" height="14" viewBox="0 0 14 14"><path d="M7 0.500 V13.500 M0.500 7 H13.500" stroke="#666" stroke-width="1"/></svg>
<div class="abs" style="left:1093px;top:311px;width:3px;height:94px;background:#555"></div>
<div class="abs" style="left:1087px;top:366.500px;width:15px;height:15px;border-radius:7.500px;background:#fff;border:1.500px solid #444"></div>
<div class="abs zb" style="top:405px"></div>
<svg style="left:1088px;top:412px" width="14" height="14" viewBox="0 0 14 14"><path d="M0.500 7 H13.500" stroke="#666" stroke-width="1"/></svg>
<div class="abs zb" style="top:442px"></div>
<svg style="left:1087px;top:449px" width="15" height="14" viewBox="0 0 15 14"><rect x="3.500" y="3" width="8" height="8" fill="none" stroke="#666" stroke-width="1.100"/><path d="M0.600 3.600 V0.600 H3.600 M11.400 0.600 H14.400 V3.600 M14.400 10.400 V13.400 H11.400 M3.600 13.400 H0.600 V10.400" fill="none" stroke="#666" stroke-width="1.100"/></svg>
<div class="abs zb" style="top:480.500px;height:3px;box-shadow:none"></div>
<div class="abs" id="bottom"></div>


<!-- ===== bottom panel content ===== -->
<div class="abs" style="left:65px;top:483px;width:1053px;height:3px;background:#f8f8f8"></div>
<div class="abs" style="left:65px;top:486px;width:1053px;height:1.500px;background:#dadada"></div>
<div class="abs" style="left:583px;top:485.500px;width:16px;height:2px;background:#1a1a1a"></div>
<span class="t" style="left:84.638px;top:503.65px;font-size:12.7px;letter-spacing:-0.036px;color:#333">General</span>
<span class="t" style="left:151.338px;top:503.65px;font-size:12.7px;letter-spacing:0.497px;color:#242424;-webkit-text-stroke:0.400px #242424">Settings</span>
<div class="abs" style="left:66px;top:525px;width:1052px;height:1px;background:#e2e2e2"></div>
<div class="abs" style="left:152px;top:524px;width:48px;height:2px;background:#117865"></div>
<svg style="left:1097px;top:504.500px" width="11" height="7" viewBox="0 0 11 7"><path d="M0.600 6 L5.500 1 L10.400 6" fill="none" stroke="#555" stroke-width="1"/></svg>
<span class="t" style="left:84.644px;top:550.83px;font-size:12.6px;letter-spacing:0.011px;color:#242424;-webkit-text-stroke:0.400px #242424">Variable type</span>
<svg style="left:161px;top:548.500px" width="11" height="11" viewBox="0 0 11 11"><circle cx="5.500" cy="5.300" r="4.700" fill="none" stroke="#777" stroke-width="0.800"/><path d="M5.500 4.600 V7.800" stroke="#777" stroke-width="0.900"/><circle cx="5.500" cy="3.100" r="0.550" fill="#777"/></svg>
<!-- radios -->
<div class="abs" style="left:285.200px;top:547.500px;width:15.600px;height:15.600px;border-radius:8px;border:1px solid #333;background:#fff"></div>
<div class="abs" style="left:288.400px;top:550.700px;width:9.200px;height:9.200px;border-radius:5px;background:#117865"></div>
<span class="t" style="left:304.356px;top:550.10px;font-size:12.4px;letter-spacing:-0.133px;color:#333">Pipeline variable</span>
<div class="abs" style="left:407px;top:547.500px;width:15.600px;height:15.600px;border-radius:8px;border:1px solid #333;background:#fff"></div>
<span class="t" style="left:426.456px;top:550.10px;font-size:12.4px;letter-spacing:-0.119px;color:#333">Pipeline return value</span>
<span class="t" style="left:84.644px;top:584.83px;font-size:12.6px;letter-spacing:-0.094px;color:#242424;-webkit-text-stroke:0.400px #242424">Name</span>
<span class="t" style="left:121.844px;top:585.63px;font-size:12.6px;color:#c4314b">*</span>
<div class="abs" style="left:286px;top:580.300px;width:248px;height:22.200px;border:1px solid #616161;border-radius:2px;background:#fff"></div>
<span class="t" style="left:294.356px;top:587.30px;font-size:12.4px;letter-spacing:-0.325px;color:#242424">var_cnt</span>
<svg style="left:516px;top:590.500px" width="9" height="5" viewBox="0 0 9 5"><path d="M0.500 0.500 L4.500 4.300 L8.500 0.500" fill="none" stroke="#555" stroke-width="0.900"/></svg>
<svg style="left:549px;top:584.500px" width="14" height="14" viewBox="0 0 14 14"><path d="M7 0.300 V13.700 M0.300 7 H13.700" stroke="#444" stroke-width="1"/></svg>
<span class="t" style="left:570.856px;top:585.70px;font-size:12.4px;letter-spacing:0.446px;color:#333">New</span>
<span class="t" style="left:84.644px;top:624.83px;font-size:12.6px;letter-spacing:-0.217px;color:#242424;-webkit-text-stroke:0.400px #242424">Value</span>
<div class="abs" style="left:286px;top:617.200px;width:248px;height:22.600px;border:1px solid #117865;border-radius:2px;background:#e6f5ef"></div>
<span class="t" style="left:292.256px;top:623.50px;font-size:12.4px;letter-spacing:-0.054px;color:#242424;-webkit-text-stroke:0.150px #242424">@variables('var_cur')</span>
</div></div>
</body>
</html>
